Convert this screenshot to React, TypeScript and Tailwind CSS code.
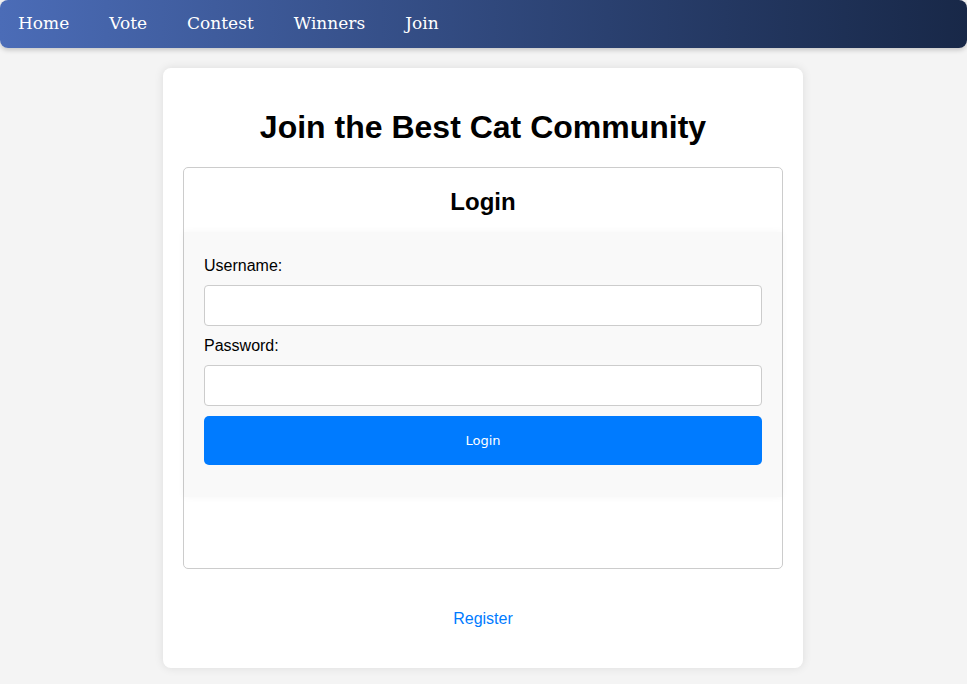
export default function App() {
  return (
    <div className="min-h-[684px] bg-[#f4f4f4] font-['Liberation_Sans',Arial,sans-serif] text-black">
      <nav className="h-[48px] rounded-[8px] bg-gradient-to-r from-[#4b6cb7] to-[#182848] shadow-[0_2px_5px_rgba(0,0,0,0.2)] flex items-center pl-[18px] gap-[40px] font-['DejaVu_Serif',serif] text-[17px] text-white">
        <a className="leading-[20px] mb-[2px]">Home</a>
        <a className="leading-[20px] mb-[2px]">Vote</a>
        <a className="leading-[20px] mb-[2px]">Contest</a>
        <a className="leading-[20px] mb-[2px]">Winners</a>
        <a className="leading-[20px] mb-[2px]">Join</a>
      </nav>
      <div className="pt-[20px] pr-[1px] flex justify-center">
        <div className="w-[640px] bg-white rounded-[8px] shadow-[0_0_10px_rgba(0,0,0,0.1)] px-[20px] pt-[41px]">
          <h1 className="text-[32px] font-bold text-center leading-[37px]">Join the Best Cat Community</h1>
          <div className="mt-[21px] border border-[#ccc] rounded-[5px]">
            <div className="h-[64px] flex items-center justify-center">
              <h2 className="text-[24px] font-bold leading-[28px] pt-[4px]">Login</h2>
            </div>
            <div className="bg-[#f9f9f9] shadow-[0_0_8px_rgba(0,0,0,0.04)] px-[20px] pt-[24px] pb-[32px] flex flex-col">
              <label className="text-[16px] leading-[18px] mb-[10px] pt-[1px]">Username:</label>
              <input className="h-[41px] bg-white border border-[#ccc] rounded-[4px] px-[10px]" />
              <label className="text-[16px] leading-[18px] mt-[10px] mb-[10px] pt-[1px]">Password:</label>
              <input type="password" className="h-[41px] bg-white border border-[#ccc] rounded-[4px] px-[10px]" />
              <button className="mt-[10px] h-[49px] rounded-[5px] bg-[#007bff] text-white text-[13px] font-['DejaVu_Sans',sans-serif]">Login</button>
            </div>
            <div className="h-[71px]"></div>
          </div>
          <div className="mt-[38px] pb-[37px] text-center">
            <a className="text-[16px] leading-[18px] text-[#007bff]">Register</a>
          </div>
        </div>
      </div>
    </div>
  );
}
